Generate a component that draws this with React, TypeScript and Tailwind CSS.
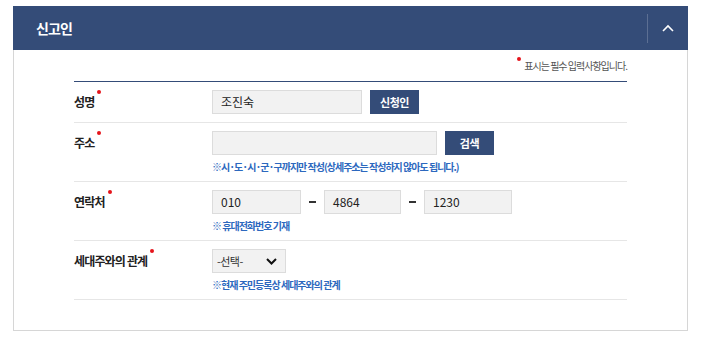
import { useState } from 'react';

const font = { fontFamily: '"Noto Sans CJK KR", "Noto Sans", sans-serif' };

function Label({ text }: { text: string }) {
  return (
    <div className="w-[138px] shrink-0 h-[24px] flex items-center">
      <span className="relative text-[12px] font-bold text-[#222] tracking-[-0.07em] leading-none">
        {text}
        <span className="absolute -right-[7px] -top-[6px] w-[4px] h-[4px] rounded-full bg-[#e5141b]"></span>
      </span>
    </div>
  );
}

function Help({ children }: { children: React.ReactNode }) {
  return (
    <p className="mt-[4px] text-[10px] leading-[15px] font-bold text-[#2c68be] tracking-[-0.1em]">
      {children}
    </p>
  );
}

function Field({ value, width }: { value: string; width: string }) {
  return (
    <div className={`${width} h-[24px] bg-[#f2f2f2] border border-[#dcdcdc] flex items-center px-[8px] text-[12px] text-[#222]`}>
      {value}
    </div>
  );
}

function NavyButton({ label }: { label: string }) {
  return (
    <button className="w-[49px] h-[24px] bg-[#344c78] text-white text-[11px] font-bold tracking-[-0.04em] flex items-center justify-center">
      {label}
    </button>
  );
}

function Dash() {
  return (
    <div className="w-[23px] flex items-center justify-center">
      <span className="w-[7px] h-[2px] bg-[#333]"></span>
    </div>
  );
}

export default function App() {
  const [open, setOpen] = useState(true);

  return (
    <div className="w-[702px] h-[339px] bg-white pt-[6px] pl-[13px]" style={font}>
      <div className="w-[675px]">
        <div className="h-[44px] bg-[#344c78] flex items-center justify-between">
          <h2 className="pl-[23px] text-white text-[14px] font-bold tracking-[-0.06em]">신고인</h2>
          <button
            onClick={() => setOpen(!open)}
            className="w-[41px] h-[29px] border-l border-white/20 flex items-center justify-center"
          >
            <svg width="12" height="8" viewBox="0 0 12 8" fill="none">
              <path d="M1 7 L6 2 L11 7" stroke="white" strokeWidth="1.6" />
            </svg>
          </button>
        </div>

        <div className="border border-t-0 border-[#d6d6d6] px-[60px] pt-[8px] pb-[30px]">
          <div className="flex justify-end items-center h-[16px] mb-[7px]">
            <span className="relative text-[10px] text-[#555] tracking-[-0.1em] leading-none">
              <span className="absolute -left-[7px] -top-[4px] w-[4px] h-[4px] rounded-full bg-[#e5141b]"></span>
              표시는 필수 입력사항입니다.
            </span>
          </div>

          <div className="border-t border-[#344c78]">
            <div className="flex py-[8px] border-b border-[#e6e6e6]">
              <Label text="성명" />
              <div className="flex gap-[8px]">
                <Field value="조진숙" width="w-[150px]" />
                <NavyButton label="신청인" />
              </div>
            </div>

            <div className="flex pt-[8px] pb-[7px] border-b border-[#e6e6e6]">
              <Label text="주소" />
              <div>
                <div className="flex gap-[8px]">
                  <Field value="" width="w-[225px]" />
                  <NavyButton label="검색" />
                </div>
                <Help>※시·도·시·군·구까지만 작성(상세주소는 작성하지 않아도 됩니다.)</Help>
              </div>
            </div>

            <div className="flex pt-[8px] pb-[7px] border-b border-[#e6e6e6]">
              <Label text="연락처" />
              <div>
                <div className="flex">
                  <Field value="010" width="w-[89px]" />
                  <Dash />
                  <Field value="4864" width="w-[77px]" />
                  <Dash />
                  <Field value="1230" width="w-[88px]" />
                </div>
                <Help>※ 휴대전화번호 기재</Help>
              </div>
            </div>

            <div className="flex pt-[8px] pb-[7px] border-b border-[#e6e6e6]">
              <Label text="세대주와의 관계" />
              <div>
                <div className="w-[74px] h-[24px] bg-[#f2f2f2] border border-[#dcdcdc] flex items-center justify-between pl-[4px] pr-[8px]">
                  <span className="text-[11px] text-[#333] tracking-[-0.05em]">-선택-</span>
                  <svg width="11" height="7" viewBox="0 0 11 7" fill="none">
                    <path d="M1 1 L5.5 5.5 L10 1" stroke="#111" strokeWidth="2" />
                  </svg>
                </div>
                <Help>※현재 주민등록상 세대주와의 관계</Help>
              </div>
            </div>
          </div>
        </div>
      </div>
    </div>
  );
}
